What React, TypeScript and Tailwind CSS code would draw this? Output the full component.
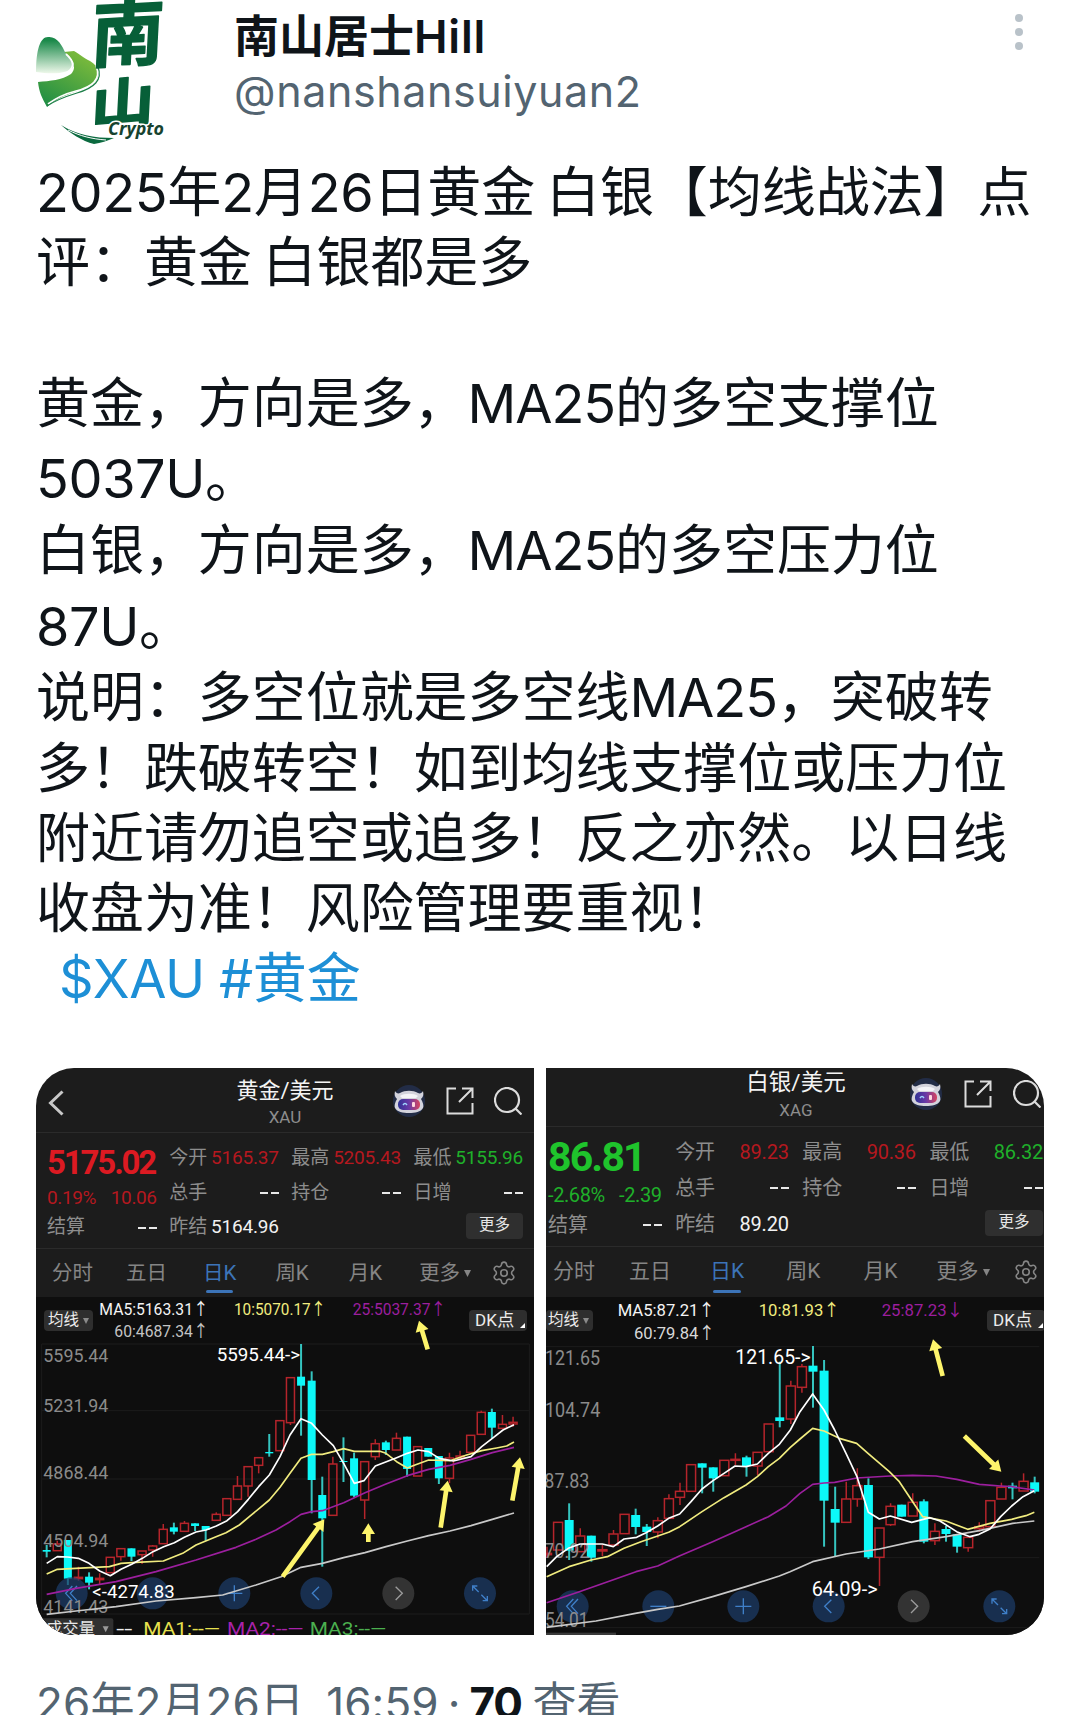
import React from "react";
import clsx from "clsx";
import { Settings } from "lucide-react";

type Candle = [
	dir: "up" | "down",
	top: number,
	bottom: number,
	high?: number,
	low?: number,
];

interface ChartText {
	text: string;
	x: number;
	y: number;
	width: number;
	fill: string;
	size?: number;
}

interface Quote {
	label: string;
	value: string;
	color: string;
}

interface Tab {
	label: string;
	className: string;
	active?: boolean;
	caret?: boolean;
}

interface Market {
	compact: boolean;
	title: string;
	symbol: string;
	price: string;
	percent: string;
	change: string;
	quotes: Quote[][];
	tabs: Tab[];
	start: number;
	step: number;
	bodyWidth: number;
	candles: Candle[];
	lines: { color: string; points: string }[];
	grid: number[];
	legend: ChartText[];
	axis: ChartText[];
	notes: ChartText[];
	arrows: number[][];
	buttonY: number;
	buttons: number[];
}

const WHITE = "text-[#f2f2f2]";
const RED = "text-[#b5181f]";
const GREEN = "text-[#1fb02a]";
const AXIS = "#8b8b8b";
const YELLOW = "#f1ec7f";
const PURPLE = "#9c1f9e";

const gold: Market = {
	compact: false,
	title: "黄金/美元",
	symbol: "XAU",
	price: "5175.02",
	percent: "0.19%",
	change: "10.06",
	quotes: [
		[
			{ label: "今开", value: "5165.37", color: RED },
			{ label: "最高", value: "5205.43", color: RED },
			{ label: "最低", value: "5155.96", color: GREEN },
		],
		[
			{ label: "总手", value: "--", color: WHITE },
			{ label: "持仓", value: "--", color: WHITE },
			{ label: "日增", value: "--", color: WHITE },
		],
	],
	tabs: [
		{ label: "分时", className: "ml-[16px]" },
		{ label: "五日", className: "ml-[33px]" },
		{ label: "日K", className: "ml-[36px]", active: true },
		{ label: "周K", className: "ml-[39px]" },
		{ label: "月K", className: "ml-[40px]" },
		{ label: "更多", className: "ml-[37px]", caret: true },
	],
	start: 32,
	step: 31.8,
	bodyWidth: 24,
	candles: [
		["down", 660, 665, 645, 682],
		["up", 642, 662, 632],
		["down", 630, 746, 630, 765],
		["up", 742, 746, 710, 752],
		["down", 740, 758, 727, 778],
		["up", 745, 749, 730, 765],
		["up", 682, 728],
		["up", 656, 680, 656, 692],
		["down", 655, 680, 655, 693],
		["up", 663, 674, 663, 702],
		["up", 648, 660, 645, 680],
		["up", 598, 641, 582],
		["down", 592, 605, 578, 613],
		["up", 580, 604, 573],
		["down", 580, 588, 580, 603],
		["down", 588, 600, 588, 632],
		["up", 553, 571, 547],
		["up", 506, 556],
		["up", 468, 508, 438],
		["up", 410, 468, 410, 500],
		["up", 383, 406, 383, 430],
		["down", 366, 370, 312, 380],
		["up", 272, 362],
		["up", 143, 278, 143, 285],
		["down", 140, 167, 42, 317],
		["down", 152, 450, 124, 550],
		["down", 495, 565, 440, 710],
		["up", 402, 556, 380],
		["down", 393, 396, 322, 456],
		["down", 385, 497, 368, 502],
		["up", 395, 510, 395, 567],
		["up", 341, 380, 328, 390],
		["down", 337, 360, 332, 375],
		["up", 325, 360, 308],
		["down", 320, 417, 320, 440],
		["up", 350, 438],
		["down", 354, 380],
		["down", 378, 445, 378, 462],
		["up", 384, 445, 368, 460],
		["up", 378, 384, 362],
		["up", 316, 367],
		["up", 247, 313, 242],
		["down", 246, 293, 236, 325],
		["up", 283, 295, 255],
		["up", 277, 282, 260, 290],
	],
	lines: [
		{
			color: "#c9c9c9",
			points:
				"32,853 120,843 240,830 360,813 480,803 560,795 660,765 735,740 795,712 859,700 923,683 987,668 1050,650 1114,633 1178,617 1242,603 1305,587 1369,568 1434,549",
		},
		{
			color: PURPLE,
			points:
				"32,793 120,775 240,755 360,725 480,690 600,652 660,628 720,600 762,575 795,553 827,545 859,542 923,518 987,488 1050,462 1114,437 1178,418 1242,406 1305,388 1369,368 1434,352",
		},
		{
			color: YELLOW,
			points:
				"32,732 64,718 105,716 220,710 255,700 300,697 382,693 440,670 480,645 540,620 570,608 610,585 640,560 670,535 700,510 732,472 762,430 795,385 827,373 859,373 892,365 923,356 955,364 1032,364 1050,370 1082,395 1114,414 1137,405 1178,390 1242,392 1292,375 1337,362 1382,354 1412,348 1434,336",
		},
		{
			color: "#ffffff",
			points:
				"32,700 64,680 95,681 127,685 159,700 191,723 223,737 255,718 287,703 319,685 351,665 383,650 415,638 445,622 480,606 510,600 541,588 573,572 605,545 637,508 668,470 700,435 732,380 762,315 795,266 827,280 859,315 892,347 923,400 955,460 984,452 1018,408 1082,383 1114,370 1146,360 1178,365 1210,385 1252,393 1305,380 1337,350 1369,325 1401,300 1434,284",
		},
	],
	grid: [42, 242, 447, 852],
	legend: [
		{ text: "MA5:5163.31↑", x: 190, y: -45, width: 328, fill: "#f4f4f4" },
		{ text: "60:4687.34↑", x: 235, y: 20, width: 283, fill: "#c4c4c4" },
		{ text: "10:5070.17↑", x: 594, y: -45, width: 276, fill: YELLOW },
		{ text: "25:5037.37↑", x: 950, y: -45, width: 280, fill: PURPLE },
	],
	axis: [
		{ text: "5595.44", x: 22, y: 97, width: 195, fill: AXIS, size: 56 },
		{ text: "5231.94", x: 22, y: 247, width: 195, fill: AXIS, size: 56 },
		{ text: "4868.44", x: 22, y: 448, width: 195, fill: AXIS, size: 56 },
		{ text: "4504.94", x: 22, y: 651, width: 195, fill: AXIS, size: 56 },
		{ text: "4141.43", x: 22, y: 850, width: 195, fill: AXIS, size: 56 },
	],
	notes: [
		{ text: "5595.44->", x: 542, y: 93, width: 250, fill: "#ffffff", size: 56 },
		{ text: "<-4274.83", x: 169, y: 803, width: 247, fill: "#ffffff", size: 56 },
		{ text: "--", x: 241, y: 914, width: 48, fill: "#eeeeee", size: 56 },
		{ text: "MA1:--—", x: 322, y: 914, width: 230, fill: "#e6e04e", size: 54 },
		{ text: "MA2:--—", x: 573, y: 914, width: 230, fill: "#a822ab", size: 54 },
		{ text: "MA3:--—", x: 821, y: 914, width: 230, fill: "#4bb04f", size: 54 },
	],
	arrows: [
		[1175, 58, 1149, -28],
		[740, 740, 865, 568],
		[997, 636, 997, 580],
		[1214, 593, 1235, 452],
		[1429, 512, 1452, 382],
	],
	buttonY: 790,
	buttons: [107, 350, 595, 841, 1087, 1332],
};

const silver: Market = {
	compact: true,
	title: "白银/美元",
	symbol: "XAG",
	price: "86.81",
	percent: "-2.68%",
	change: "-2.39",
	quotes: [
		[
			{ label: "今开", value: "89.23", color: RED },
			{ label: "最高", value: "90.36", color: RED },
			{ label: "最低", value: "86.32", color: GREEN },
		],
		[
			{ label: "总手", value: "--", color: WHITE },
			{ label: "持仓", value: "--", color: WHITE },
			{ label: "日增", value: "--", color: WHITE },
		],
	],
	tabs: [
		{ label: "分时", className: "ml-[7px]" },
		{ label: "五日", className: "ml-[34px]" },
		{ label: "日K", className: "ml-[39px]", active: true },
		{ label: "周K", className: "ml-[42px]" },
		{ label: "月K", className: "ml-[43px]" },
		{ label: "更多", className: "ml-[39px]", caret: true },
	],
	start: 3,
	step: 33.25,
	bodyWidth: 27,
	candles: [
		["up", 670, 674, 650, 684],
		["up", 577, 660],
		["down", 570, 662, 520, 690],
		["up", 618, 665, 595],
		["down", 617, 683, 617, 695],
		["up", 659, 663, 645, 678],
		["up", 612, 645, 600],
		["up", 553, 611],
		["down", 555, 591, 536, 613],
		["down", 590, 606, 582, 648],
		["up", 572, 606, 562, 625],
		["up", 506, 565, 493],
		["up", 484, 502, 458, 525],
		["up", 404, 484],
		["down", 400, 413, 400, 490],
		["down", 412, 445, 412, 485],
		["up", 391, 437],
		["up", 388, 391, 370, 405],
		["down", 382, 408, 377, 440],
		["up", 367, 408, 367, 435],
		["up", 282, 365],
		["down", 262, 273, 95, 292],
		["up", 168, 267, 152, 282],
		["up", 110, 172, 102, 188],
		["down", 107, 125, 48, 233],
		["down", 122, 512, 90, 650],
		["down", 537, 578, 470, 680],
		["up", 507, 577, 455],
		["up", 467, 507, 415, 530],
		["down", 465, 682, 445, 687],
		["up", 594, 682, 594, 768],
		["up", 529, 584, 520, 588],
		["down", 524, 560],
		["up", 517, 558, 490],
		["down", 514, 635, 508, 640],
		["up", 604, 632, 580, 645],
		["down", 597, 612, 588, 635],
		["down", 613, 650, 613, 668],
		["up", 622, 653, 622, 665],
		["up", 590, 596, 577, 605],
		["up", 512, 590],
		["up", 472, 507, 458],
		["down", 467, 475, 458, 508],
		["up", 454, 483, 430],
		["down", 457, 485, 440, 490],
	],
	lines: [
		{
			color: "#c9c9c9",
			points:
				"2,892 150,873 268,850 335,838 400,828 500,800 600,770 700,738 732,725 800,695 900,672 1000,657 1100,635 1200,620 1300,602 1400,580 1465,573",
		},
		{
			color: PURPLE,
			points:
				"2,818 100,785 200,750 270,725 335,708 400,678 500,635 600,590 667,560 720,528 762,490 800,463 834,459 866,457 932,444 1032,438 1100,436 1170,438 1232,448 1300,463 1364,468 1397,470 1465,480",
		},
		{
			color: YELLOW,
			points:
				"2,740 69,710 135,690 184,680 234,655 285,635 368,607 401,590 468,545 534,503 600,465 634,440 667,410 700,385 733,352 762,327 800,295 834,303 880,325 932,340 966,370 1030,425 1060,455 1130,560 1200,573 1265,598 1332,580 1397,568 1440,557 1465,547",
		},
		{
			color: "#ffffff",
			points:
				"2,710 32,680 67,655 102,642 169,642 202,650 234,627 272,622 300,608 335,588 368,565 401,552 435,515 468,477 501,452 534,430 567,408 600,410 634,402 667,370 700,343 733,300 762,245 800,192 834,240 866,300 900,370 933,440 967,547 1000,567 1033,558 1097,577 1152,563 1182,573 1232,605 1272,620 1299,613 1332,597 1364,560 1397,528 1431,500 1465,482",
		},
	],
	grid: [50, 470, 683, 893],
	legend: [
		{ text: "MA5:87.21↑", x: 215, y: -42, width: 292, fill: "#f4f4f4" },
		{ text: "60:79.84↑", x: 264, y: 28, width: 243, fill: "#d8d8d8" },
		{ text: "10:81.93↑", x: 638, y: -42, width: 244, fill: YELLOW },
		{ text: "25:87.23↓", x: 1007, y: -42, width: 245, fill: PURPLE },
	],
	axis: [
		{ text: "121.65", x: -3, y: 105, width: 165, fill: AXIS, size: 58 },
		{ text: "104.74", x: -3, y: 261, width: 166, fill: AXIS, size: 58 },
		{ text: "87.83", x: -5, y: 474, width: 135, fill: AXIS, size: 58 },
		{ text: "70.92", x: -5, y: 683, width: 135, fill: AXIS, size: 58 },
		{ text: "54.01", x: -3, y: 892, width: 130, fill: AXIS, size: 58 },
	],
	notes: [
		{ text: "121.65->", x: 568, y: 102, width: 226, fill: "#ffffff", size: 58 },
		{ text: "64.09->", x: 797, y: 797, width: 198, fill: "#ffffff", size: 58 },
	],
	arrows: [
		[1190, 138, 1161, 28],
		[1255, 318, 1366, 425],
	],
	buttonY: 829,
	buttons: [80, 337, 592, 848, 1103, 1360],
};

const paragraphs = [
	{ text: "2025年2月26日黄金 白银【均线战法】点", className: "" },
	{ text: "评：黄金 白银都是多", className: "" },
	{ text: "", className: "" },
	{ text: "黄金，方向是多，MA25的多空支撑位", className: "" },
	{ text: "5037U。", className: "mt-[5px]" },
	{ text: "白银，方向是多，MA25的多空压力位", className: "mt-[2px]" },
	{ text: "87U。", className: "mt-[6px]" },
	{ text: "说明：多空位就是多空线MA25，突破转", className: "mt-[1px]" },
	{ text: "多！跌破转空！如到均线支撑位或压力位", className: "" },
	{ text: "附近请勿追空或追多！反之亦然。以日线", className: "" },
	{ text: "收盘为准！风险管理要重视！", className: "" },
];

// Latin runs get their own tracking inside the Chinese text
const Mixed: React.FC<{ text: string }> = ({ text }) => (
	<>
		{text.split(/([A-Za-z0-9$#]+)/).map((part, i) =>
			i % 2 ? (
				<span key={i} className={part.startsWith("MA") ? "tracking-[-0.02em]" : "tracking-[-0.007em]"}>
					{part}
				</span>
			) : (
				part
			)
		)}
	</>
);

const Avatar = () => (
	<svg className="w-[150px] h-[150px] shrink-0" viewBox="0 0 150 150">
		<defs>
			<linearGradient id="hill" x1="0" y1="0" x2="0" y2="1">
				<stop offset="0.1" stopColor="#1c8a4b" />
				<stop offset="1" stopColor="#eef8ea" />
			</linearGradient>
			<linearGradient id="road" x1="0" y1="1" x2="0.6" y2="0">
				<stop offset="0" stopColor="#178a45" />
				<stop offset="1" stopColor="#79b93c" />
			</linearGradient>
		</defs>
		<path d="M44 52L54 51C60 54 63 58 70 61C78 66 82 74 74 83C62 92 44 92 27 107C22 98 19 92 18 82C30 81 42 80 51 74C58 67 52 58 44 52z" fill="url(#road)" />
		<path d="M16 72C16 50 20 37 28 37C37 36 42 45 46 54C50 59 55 62 54 66C50 73 35 75 16 72z" fill="url(#hill)" />
		<path d="M46 54c9 8 8 13 2 18-8 6-20 5-30 8" fill="none" stroke="#fff" strokeWidth="1.8" />
		<path d="M76 66c6 14-5 21-20 25-12 3-20 7-28 13" fill="none" stroke="#fff" strokeWidth="1.6" />
		<path d="M78 67c5 13-4 21-21 26-13 4-21 7-30 13" fill="none" stroke="#1d7f48" strokeWidth="1.2" />
		<g
			fill="#075f38"
			stroke="#075f38"
			strokeWidth="1.5"
			strokeLinejoin="round"
			fontWeight="700"
			className="font-['Noto_Sans_CJK_SC',sans-serif]"
		>
			<text fontSize="73" transform="translate(70 62) rotate(-3) skewX(-6)">
				南
			</text>
			<text fontSize="51" transform="translate(70 124) rotate(-5) skewX(-8) scale(1.250 1)">
				山
			</text>
		</g>
		<path d="M41 125c16 10 33 13 53 13-7 3-13 5-20 6-12-3-24-11-33-19z" fill="#0b6a3f" />
		<path d="M48 130c12 6 24 9 38 10" fill="none" stroke="#fff" strokeWidth="1" />
		<text
			x="88"
			y="135"
			fontSize="18"
			fontWeight="700"
			fontStyle="italic"
			fill="#17432f"
			stroke="#fff"
			strokeWidth="3"
			paintOrder="stroke"
			textLength="56"
			lengthAdjust="spacingAndGlyphs"
			className="font-['Noto_Sans',sans-serif]"
		>
			Crypto
		</text>
	</svg>
);

const Robot = () => (
	<svg className="w-[34px] h-[34px]" viewBox="0 0 34 34">
		<defs>
			<linearGradient id="visor">
				<stop offset="0" stopColor="#2f3296" />
				<stop offset="0.5" stopColor="#6a3aa6" />
				<stop offset="1" stopColor="#d8455f" />
			</linearGradient>
		</defs>
		<circle cx="17" cy="17" r="16" fill="#222c46" />
		<path d="M3 7c1 2 3 3 5 2 5-3 13-3 18 0 2 1 4 0 5-2 1 4 0 6-2 8 2 3 3 7 2 9-2 4-8 5-14 5s-12-1-14-5c-1-2 0-6 2-9-2-2-3-4-2-8z" fill="#d3d3dc" />
		<path d="M8 12c4-3 14-3 18 0l-2 2H10z" fill="#f4f4f8" />
		<rect x="6" y="15" width="22" height="11" rx="5" fill="url(#visor)" />
		<path d="M11 21q2-3 4 0" fill="none" stroke="#9fd4ff" strokeWidth="1.4" />
		<rect x="20" y="18" width="3" height="5" rx="1" fill="#ffd7de" />
	</svg>
);

const ShareIcon = () => (
	<svg className="w-7 h-7" viewBox="0 0 28 28" fill="none" stroke="#dcdcdc" strokeWidth="2">
		<path d="M10 1.500H1.500v25h25V16" />
		<path d="M16 1.500h10.500V11M26 2L13 15" />
	</svg>
);

const SearchIcon = () => (
	<svg className="w-7 h-7" viewBox="0 0 28 28" fill="none" stroke="#dcdcdc" strokeWidth="2.200">
		<circle cx="13" cy="13" r="12" />
		<path d="M21.500 21.500l6 6" />
	</svg>
);

const Arrow: React.FC<{ points: number[] }> = ({ points }) => {
	const [x1, y1, x2, y2] = points;
	const length = Math.hypot(x2 - x1, y2 - y1);
	const angle = (Math.atan2(y2 - y1, x2 - x1) * 180) / Math.PI;

	return (
		<path
			d={`M0 -7H${length - 32}V-20L${length} 0L${length - 32} 20V7H0z`}
			fill="#fdf46b"
			transform={`translate(${x1} ${y1}) rotate(${angle})`}
		/>
	);
};

const glyphs = [
	"M2 -22L-18 0L2 22M16 -22L-4 0L16 22",
	"M-24 0H24",
	"M-24 0H24M0 -24V24",
	"M8 -20L-12 0L8 20",
	"M-8 -20L12 0L-8 20",
	"M-4 -4L-22 -22M-22 -8V-22H-8M4 4L22 22M22 8V22H8",
];

const ChartLabel: React.FC<{ item: ChartText }> = ({ item }) => (
	<text
		x={item.x}
		y={item.y}
		fill={item.fill}
		fontSize={item.size ?? 50}
		textLength={item.width}
		lengthAdjust="spacingAndGlyphs"
		className="font-[Roboto,'Noto_Sans_CJK_SC',sans-serif]"
	>
		{item.text}
	</text>
);

const Chart: React.FC<{ market: Market }> = ({ market }) => (
	<svg className="block w-[498px] h-[338px]" viewBox="0 -99 1494 1014">
		<g stroke="#1c1c1c" strokeWidth="3" fill="none">
			{market.grid.map((y) => (
				<path key={y} d={`M${market.compact ? 0 : 17} ${y}H1480`} />
			))}
			{!market.compact && <path d="M17 42V852M1480 42V852" />}
		</g>
		{!market.compact && <rect x="0" y="865" width="232" height="60" rx="6" fill="#303030" />}
		{market.compact && <rect x="0" y="908" width="210" height="8" fill="#3a3a3a" />}

		{market.candles.map(([dir, top, bottom, high = top, low = bottom], i) => {
			const x = market.start + i * market.step;
			const w = market.bodyWidth;
			return dir === "down" ? (
				<g key={i} fill="#0cf8f8">
					<rect x={x - 3} y={high} width="6" height={low - high} fill="#35c4bf" />
					<rect x={x - w / 2} y={top} width={w} height={bottom - top} />
				</g>
			) : (
				<g key={i} fill="none" stroke="#b5242b" strokeWidth="4.5">
					<path d={`M${x} ${high}V${top}M${x} ${bottom}V${low}`} />
					<rect x={x - w / 2} y={top} width={w} height={bottom - top} />
				</g>
			);
		})}

		{market.buttons.map((x, i) => (
			<g key={x} transform={`translate(${x} ${market.buttonY})`}>
				<circle r="48" fill={i === 4 ? "#3a3a3a" : "#1c3d6b"} fillOpacity={i === 4 ? 0.85 : 0.7} />
				{(market.compact || i !== 1) && (
					<path d={glyphs[i]} fill="none" stroke={i === 4 ? "#9c9c9c" : "#3f7fc8"} strokeWidth="4" />
				)}
			</g>
		))}

		{market.axis.map((item) => (
			<ChartLabel key={item.text} item={item} />
		))}

		{market.lines.map((line) => (
			<polyline
				key={line.color}
				points={line.points}
				fill="none"
				stroke={line.color}
				strokeWidth="5"
				strokeLinejoin="round"
			/>
		))}

		{[...market.legend, ...market.notes].map((item) => (
			<ChartLabel key={item.text} item={item} />
		))}

		{market.arrows.map((points, i) => (
			<Arrow key={i} points={points} />
		))}

		{!market.compact && (
			<g className="font-['Noto_Sans_CJK_SC',sans-serif]">
				<text x="30" y="911" fontSize="49" fill="#e8e8e8" textLength="147">
					成交量
				</text>
				<path d="M200 889h18l-9 18z" fill="#9a9a9a" />
			</g>
		)}
	</svg>
);

const QuoteCell: React.FC<Quote> = ({ label, value, color }) => (
	<div className="flex items-center justify-between">
		<span className="text-[#8d8d8d]">{label}</span>
		{value === "--" ? (
			<span className="flex gap-[3px]">
				<i className="w-2 h-[2px] bg-[#e8e8e8]" />
				<i className="w-2 h-[2px] bg-[#e8e8e8]" />
			</span>
		) : (
			<span className={clsx("tracking-[-0.01em]", color)}>{value}</span>
		)}
	</div>
);

const MarketCard: React.FC<{ market: Market }> = ({ market }) => {
	const { compact } = market;
	const trend = compact ? "text-[#1fc42c]" : "text-[#dc1a22]";

	return (
		<div
			className={clsx(
				"relative w-[498px] h-[567px] overflow-hidden bg-[#1c1c1c] font-[Roboto,'Noto_Sans_CJK_SC',sans-serif]",
				compact ? "rounded-r-[38px]" : "rounded-l-[38px]"
			)}
		>
			<div
				className={clsx(
					"grid grid-cols-[1fr_auto_1fr] border-b border-[#2b2b2b]",
					compact ? "h-[59px]" : "h-[65px]"
				)}
			>
				<div className="flex items-center pl-[12px]">
					{!compact && (
						<svg className="w-4 h-[26px] mt-[6px]" viewBox="0 0 16 26" fill="none" stroke="#c8c8c8" strokeWidth="3">
							<path d="M14.500 1.500L2.500 13l12 11.500" />
						</svg>
					)}
				</div>
				<div className={clsx("text-center whitespace-nowrap", compact ? "pl-[2px]" : "pt-[9px]")}>
					<div
						className={clsx(
							"leading-7 text-[#f4f4f4]",
							compact ? "text-[22.5px]" : "text-[22px]"
						)}
					>
						{market.title}
					</div>
					<div className={clsx("text-[17px] leading-6 text-[#8d8d8d]", compact && "mt-[2px]")}>
						{market.symbol}
					</div>
				</div>
				<div
					className={clsx(
						"flex items-center justify-end",
						compact ? "gap-[21px] pr-[3px] pb-[6px]" : "gap-5 pr-[12px] pt-[2px]"
					)}
				>
					<Robot />
					<ShareIcon />
					<SearchIcon />
				</div>
			</div>

			<div
				className={clsx(
					"grid grid-cols-4 border-b border-[#2b2b2b]",
					compact
						? "h-[120px] gap-x-[13.5px] pl-[2px] pr-[1px] text-[20px]"
						: "h-[116px] gap-x-[12.5px] pl-[11px] pr-[11px] text-[19px]"
				)}
			>
				<div className="flex flex-col whitespace-nowrap">
					<div
						className={clsx(
							"font-bold",
							trend,
							compact
								? "h-[51px] pt-[9px] text-[41px] leading-[42px] tracking-[-0.045em]"
								: "h-[48px] pt-[9px] text-[33px] leading-[42px] tracking-[-0.065em]"
						)}
					>
						{market.price}
					</div>
					<div className={clsx("flex justify-between leading-[34px]", compact ? GREEN : RED)}>
						<span className={compact ? "tracking-[-0.02em]" : "tracking-[-0.02em]"}>{market.percent}</span>
						<span className="tracking-[-0.02em]">{market.change}</span>
					</div>
					<div className={compact ? "mt-[-5px]" : "mt-[-5px]"}>
						<div className="h-[35px] flex flex-col justify-center">
							<QuoteCell label="结算" value="--" color={WHITE} />
						</div>
					</div>
				</div>
				<div
					className={clsx(
						"col-span-3 grid grid-cols-3 h-[104px]",
						compact ? "gap-x-[13.5px] pt-[7px] auto-rows-[36px]" : "gap-x-[12.5px] pt-[8px] auto-rows-[34.5px]"
					)}
				>
					{market.quotes.flat().map((quote) => (
						<QuoteCell key={quote.label} {...quote} />
					))}
					<div className="flex items-center justify-between text-[#f2f2f2]">
						<span className="text-[#8d8d8d]">昨结</span>
						<span className="tracking-[-0.01em]">{compact ? "89.20" : "5164.96"}</span>
					</div>
					<div className="col-span-2 flex items-center justify-end">
						<span
							className={clsx(
								"h-[26px] leading-[25px] rounded bg-[#2f2f2f] text-center text-[15.5px] text-[#e6e6e6]",
								compact ? "w-[58px] mb-[3px]" : "w-[57px] mb-[2px]"
							)}
						>
							更多
						</span>
					</div>
				</div>
			</div>

			<div
				className={clsx(
					"flex items-center text-[#858585]",
					compact ? "h-[50px] text-[21px]" : "h-[48px] text-[20.5px]"
				)}
			>
				{market.tabs.map((tab) => (
					<div
						key={tab.label}
						className={clsx(
							"relative flex items-center gap-1 shrink-0 h-full whitespace-nowrap",
							tab.className,
							tab.active && "text-[#3c74b8]"
						)}
					>
						{tab.label}
						{tab.caret && (
							<svg className="w-[7px] h-[7px]" viewBox="0 0 7 7" fill="#858585">
								<path d="M0 0h7L3.500 7z" />
							</svg>
						)}
						{tab.active && <i className="absolute inset-x-[3px] bottom-1 h-[3px] rounded bg-[#3c74b8]" />}
					</div>
				))}
				<Settings
					className={clsx("w-[26px] h-[26px] shrink-0", compact ? "ml-[23px]" : "ml-[20px]")}
					strokeWidth={1.5}
				/>
			</div>

			<div className="relative bg-[#0e0e0e]">
				<Chart market={market} />
				<div
					className={clsx(
						"absolute top-[13px] flex items-center gap-1 h-[21px] rounded-sm bg-[#2e2e2e] text-[15.5px] text-[#ececec]",
						compact ? "left-0 pl-[2px] pr-1" : "left-2 pl-1 pr-1"
					)}
				>
					均线
					<svg className="w-[6px] h-[6px]" viewBox="0 0 7 7" fill="#8a8a8a">
						<path d="M0 0h7L3.500 7z" />
					</svg>
				</div>
				<div
					className={clsx(
						"absolute top-[13px] flex items-center h-[21px] w-[58px] rounded-sm bg-[#2e2e2e] text-[17px] tracking-[0.01em] text-[#ececec] pl-[6px]",
						compact ? "left-[441px]" : "left-[433px]"
					)}
				>
					DK点
					<svg className="absolute right-[2px] bottom-[3px] w-[5px] h-[5px]" viewBox="0 0 5 5" fill="#fff">
						<path d="M5 0v5H0z" />
					</svg>
				</div>
			</div>
		</div>
	);
};

const App = () => (
	<div className="w-[1080px] h-[1715px] overflow-hidden bg-white text-[#0f1419] font-[Inter,'Noto_Sans_CJK_SC',sans-serif]">
		<div className="flex h-[158px] pl-5">
			<Avatar />
			<div className="flex-1 pl-[64px] pt-[10px] whitespace-nowrap">
				<div className="text-[45px] leading-[54px] font-bold">
					南山居士<span className="tracking-[0.017em] font-semibold">Hill</span>
				</div>
				<div className="text-[43px] leading-[54px] text-[#536471] tracking-[0.014em]">
					@nanshansuiyuan2
				</div>
			</div>
			<div className="flex flex-col gap-[6px] w-[8px] mt-[14px] mr-[57px]">
				<i className="size-[8px] rounded-full bg-[#b9c2c9]" />
				<i className="size-[8px] rounded-full bg-[#b9c2c9]" />
				<i className="size-[8px] rounded-full bg-[#b9c2c9]" />
			</div>
		</div>

		<div className="pl-9 text-[54px] tracking-[-0.001em] whitespace-pre">
			{paragraphs.map(({ text, className }, i) => (
				<p key={i} className={clsx("h-[70.2px] leading-[70px] [word-spacing:-4.4px]", className)}>
					<Mixed text={text} />
				</p>
			))}
			<p className="h-[70px] leading-[70px] pl-[23px] text-[#1d8fd6] [word-spacing:-1px]">
				<Mixed text="$XAU #黄金" />
			</p>
		</div>

		<div className="flex gap-3 pl-9 mt-[54px]">
			<MarketCard market={gold} />
			<MarketCard market={silver} />
		</div>

		<div className="pl-9 mt-[38px] text-[44px] leading-[60px] tracking-[0.003em] whitespace-pre text-[#536471]">
			26年2月26日{"  "}
			<span className="ml-[-3px]">16:59</span>
			<span className="[word-spacing:-3.5px]"> · </span>
			<span className="font-bold text-[#0f1419] tracking-[-0.025em]">70</span>
			<span className="[word-spacing:-2px]"> 查看</span>
		</div>
	</div>
);

export default App;
